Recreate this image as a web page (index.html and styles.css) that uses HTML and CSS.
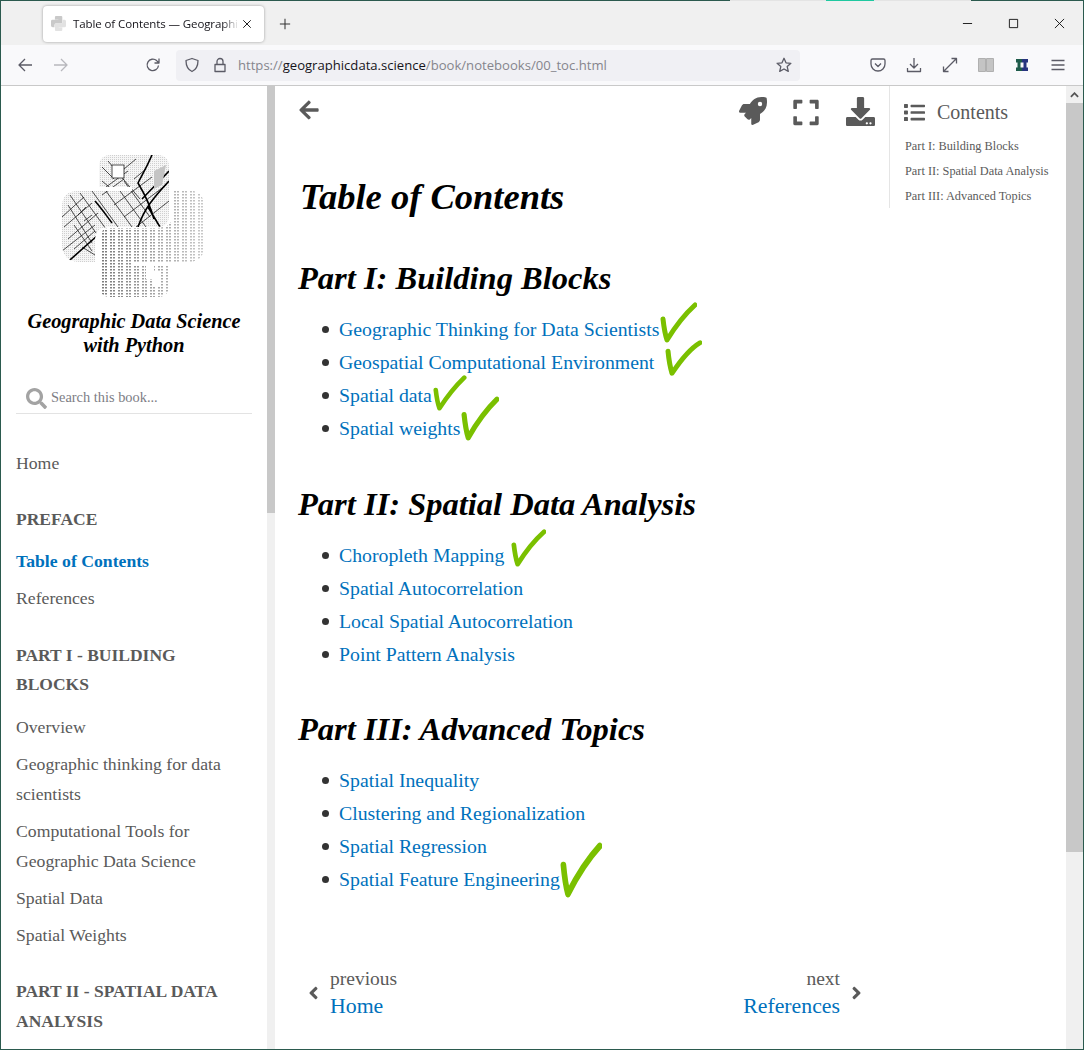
FILE: index.html
```html
<!DOCTYPE html>
<html>
<head>
    <title>Table of Contents — Geographic Data Science with Python</title>
    <link rel="stylesheet" href="styles.css">
</head>
<body>
<div class="window">
    <div class="stripe"><i class="s-a"></i><i class="s-b"></i><i class="s-c"></i><i class="s-b2"></i><i class="s-d"></i></div>

    <div class="tabbar">
        <div class="tab">
            <svg class="favicon" viewBox="0 0 142 142"><path fill="#c9c9c9" d="M47 0H97Q107 0 107 10V62Q107 72 97 72H47Q33 72 33 86V107H16Q0 107 0 90V50Q0 36 14 36H70V32H37V12Q37 0 47 0Z"/><path fill="#e2e2e2" d="M109 36H130Q142 36 142 52V92Q142 107 128 107H72V110H107V130Q107 142 97 142H47Q37 142 37 130V85Q37 72 47 72H95Q109 72 109 58Z"/></svg>
            <span class="tab-title">Table of Contents — Geographi</span>
            <svg class="tab-close" viewBox="0 0 12 12"><path d="M1.500 1.500l9 9M10.500 1.500l-9 9"/></svg>
        </div>
        <svg class="new-tab" viewBox="0 0 14 14"><path d="M7 1v12M1 7h12"/></svg>
        <div class="win-controls">
            <svg class="win-min" viewBox="0 0 12 12"><path d="M1 6h10"/></svg>
            <svg class="win-max" viewBox="0 0 12 12"><path d="M1.500 1.500h9v9h-9z"/></svg>
            <svg class="win-close" viewBox="0 0 12 12"><path d="M1 1l10 10M11 1L1 11"/></svg>
        </div>
    </div>

    <div class="navbar">
        <svg class="tool tool-back" viewBox="0 0 16 16"><path d="M15 8H2M8 2L2 8l6 6"/></svg>
        <svg class="tool tool-fwd" viewBox="0 0 16 16"><path d="M1 8h13M8 2l6 6-6 6"/></svg>
        <svg class="tool tool-reload" viewBox="0 0 16 16"><path d="M13.500 8.500A5.700 5.700 0 1 1 11.600 3.600L14 6M14 1.500V6H9.500"/></svg>
        <div class="urlbar">
            <svg class="tool" viewBox="0 0 16 16"><path d="M8 1.500l6 2c0 5.500-1.500 9-6 11-4.500-2-6-5.500-6-11z"/></svg>
            <svg class="tool tool-lock" viewBox="0 0 16 16"><path d="M3 7.500h10v7H3zM5 7.500V4.500a3 3 0 0 1 6 0v3"/></svg>
            <span class="url">https://<b>geographicdata.science</b>/book/notebooks/00_toc.html</span>
            <svg class="tool tool-star" viewBox="0 0 16 16"><path d="M8 1.300l2 4.500 4.900.5-3.700 3.300 1.100 4.800L8 12l-4.300 2.400 1.100-4.800L1.100 6.300 6 5.800z"/></svg>
        </div>
        <div class="nav-right">
            <svg class="tool" viewBox="0 0 16 16"><path d="M2.500 2h11a1.500 1.500 0 0 1 1.500 1.500V7A7 7 0 0 1 1 7V3.500A1.500 1.500 0 0 1 2.500 2zM5 6.500l3 3 3-3"/></svg>
            <svg class="tool" viewBox="0 0 16 16"><path d="M8 1v10M4 7l4 4 4-4M1.500 11v3.500h13V11"/></svg>
            <svg class="tool" viewBox="0 0 16 16"><path d="M1.500 14.500l13-13M9.500 1.500h5v5M1.500 9.500v5h5" /></svg>
            <svg class="tool tool-lib" viewBox="0 0 16 16"><path d="M.5 1.500h7v13h-7zM8.500 1.500h7v13h-7z"/></svg>
            <svg class="tool tool-ext" viewBox="0 0 16 16"><path fill="#1e5b4a" d="M2 2h6v3.500H6.500v5H8V14H2v-3.500h1.500v-5H2z"/><path fill="#27347f" d="M8 2h6v3.500h-1.500v5H14V14H8v-3.500h1.500v-5H8z"/></svg>
            <svg class="tool" viewBox="0 0 16 16"><path d="M1.500 3.500h13M1.500 8h13M1.500 12.500h13"/></svg>
        </div>
    </div>

    <div class="page">
        <nav class="sidebar">
            <svg class="logo" viewBox="0 0 142 142">
                <defs>
                    <clipPath id="topClip"><path d="M49 0H95Q107 0 107 12V60Q107 72 95 72H47Q33 72 33 86V107H18Q0 107 0 88V52Q0 36 16 36H70V32H37V12Q37 0 49 0Z"/></clipPath>
                    <clipPath id="botClip"><path d="M111 36H128Q142 36 142 52V90Q142 107 126 107H72V110H107V130Q107 142 95 142H49Q37 142 37 130V86Q37 73 49 73H95Q111 73 111 58Z"/></clipPath>
                    <pattern id="dither" width="2" height="2" patternUnits="userSpaceOnUse"><rect width="2" height="2" fill="#f6f6f6"/><rect width="1" height="1" fill="#cfcfcf"/></pattern>
                    <pattern id="digits" width="8" height="3" patternUnits="userSpaceOnUse"><rect width="5" height="1.500" fill="#7a7a7a"/><rect x="2" width="1" height="3" fill="#fff"/></pattern>
                    <linearGradient id="fadeOut"><stop offset="0" stop-color="#fff" stop-opacity="0"/><stop offset="1" stop-color="#fff" stop-opacity=".6"/></linearGradient>
                </defs>
                <g clip-path="url(#topClip)">
                    <rect width="142" height="142" fill="url(#dither)"/>
                    <path class="st-thin" d="M0 62L22 42M2 72L30 48M6 84L36 58M12 94L33 76M0 96L33 70M8 40L34 78M18 38L44 74M30 36L56 72M6 50L30 88M12 70L30 96M20 92L33 100M44 36L70 72M58 36L84 72M40 26L52 36M40 12L52 24M46 6L78 44M62 26L88 62M40 40L62 24M52 50L90 22M62 62L104 30M74 72L107 46M44 32L66 16M62 14L74 4M72 24L84 14M16 60L24 52M22 66L30 60"/>
                    <path class="st-thick" d="M76 72C82 54 92 42 107 26M90 0C84 14 80 20 76 28C82 38 88 50 92 64M0 112L36 80M33 46C40 54 44 60 50 68M98 72L86 52M80 44L107 16"/>
                    <rect x="50" y="10" width="12" height="13" fill="#fff" stroke="#222" stroke-width=".8"/>
                    <path fill="#c4c4c4" d="M92 16L104 10 100 30 92 34z"/>
                </g>
                <g clip-path="url(#botClip)">
                    <rect width="142" height="142" fill="#fff"/>
                    <rect x="37" y="36" width="105" height="106" fill="url(#digits)"/>
                    <rect x="37" y="36" width="105" height="106" fill="url(#fadeOut)"/>
                    <path fill="#fff" d="M84 108h8v8h6v16h-8v-8h-6z"/>
                </g>
            </svg>
            <div class="book-title">Geographic Data Science<br>with Python</div>
            <div class="search">
                <svg class="search-icon" viewBox="0 0 512 512"><path d="M505 442.700L405.300 343c-4.500-4.500-10.600-7-17-7H372c27.600-35.300 44-79.700 44-128C416 93.100 322.900 0 208 0S0 93.100 0 208s93.100 208 208 208c48.300 0 92.700-16.400 128-44v16.300c0 6.400 2.500 12.500 7 17l99.700 99.700c9.400 9.400 24.600 9.400 33.900 0l28.300-28.300c9.400-9.400 9.400-24.600.1-34zM208 336c-70.700 0-128-57.200-128-128 0-70.700 57.200-128 128-128 70.700 0 128 57.200 128 128 0 70.700-57.200 128-128 128z"/></svg>
                <span>Search this book...</span>
            </div>
            <a class="side-link side-home">Home</a>
            <div class="side-head side-first">PREFACE</div>
            <a class="side-link active">Table of Contents</a>
            <a class="side-link">References</a>
            <div class="side-head">PART I - BUILDING BLOCKS</div>
            <a class="side-link">Overview</a>
            <a class="side-link">Geographic thinking for data scientists</a>
            <a class="side-link">Computational Tools for Geographic Data Science</a>
            <a class="side-link">Spatial Data</a>
            <a class="side-link">Spatial Weights</a>
            <div class="side-head">PART II - SPATIAL DATA ANALYSIS</div>
        </nav>
        <div class="side-scroll"><div class="side-thumb"></div></div>

        <main class="content">
            <div class="top-icons">
                <svg class="icon-back" viewBox="0 0 448 512"><path d="M257.500 445.100l-22.200 22.200c-9.400 9.400-24.600 9.400-33.900 0L7 273c-9.400-9.400-9.400-24.600 0-33.900L201.400 44.700c9.400-9.400 24.600-9.400 33.900 0l22.200 22.200c9.500 9.500 9.300 25-.4 34.300L136.600 216H424c13.300 0 24 10.700 24 24v32c0 13.300-10.700 24-24 24H136.600l120.500 114.800c9.800 9.300 10 24.800.4 34.300z"/></svg>
                <svg class="icon-rocket" viewBox="0 0 512 512"><path d="M505.100 19.100c-1.200-5.500-6.700-11-12.200-12.200C460.700 0 435.500 0 410.400 0 307.200 0 245.300 55.200 199.100 128H94.800c-16.300 0-35.600 11.900-42.900 26.500L2.500 253.300A28.400 28.400 0 0 0 0 264a24 24 0 0 0 24 24h103.800l-22.500 22.500c-11.400 11.400-13 32.300 0 45.200l50.900 50.900c11.200 11.200 32.200 13.200 45.300 0l22.500-22.500V488a24 24 0 0 0 24 24 28.600 28.600 0 0 0 10.700-2.500l98.700-49.400c14.600-7.300 26.500-26.500 26.500-42.900V312.800c72.600-46.300 128-108.400 128-211.100.1-25.200.1-50.400-6.900-82.600zM384 168a40 40 0 1 1 40-40 40 40 0 0 1-40 40z"/></svg>
                <svg class="icon-expand" viewBox="0 0 448 512"><path d="M0 180V56c0-13.300 10.700-24 24-24h124c6.600 0 12 5.400 12 12v40c0 6.600-5.400 12-12 12H64v84c0 6.600-5.400 12-12 12H12c-6.600 0-12-5.400-12-12zM288 44v40c0 6.600 5.400 12 12 12h84v84c0 6.600 5.400 12 12 12h40c6.600 0 12-5.400 12-12V56c0-13.300-10.700-24-24-24H300c-6.600 0-12 5.400-12 12zm148 276h-40c-6.600 0-12 5.400-12 12v84h-84c-6.600 0-12 5.400-12 12v40c0 6.600 5.400 12 12 12h124c13.300 0 24-10.700 24-24V332c0-6.600-5.400-12-12-12zM160 468v-40c0-6.600-5.400-12-12-12H64v-84c0-6.600-5.400-12-12-12H12c-6.600 0-12 5.400-12 12v124c0 13.300 10.700 24 24 24h124c6.600 0 12-5.400 12-12z"/></svg>
                <svg class="icon-download" viewBox="0 0 512 512"><path d="M216 0h80c13.300 0 24 10.700 24 24v168h87.700c17.800 0 26.700 21.500 14.100 34.100L269.700 378.300c-7.500 7.500-19.800 7.500-27.300 0L90.100 226.100c-12.600-12.600-3.700-34.100 14.100-34.100H192V24c0-13.300 10.700-24 24-24zm296 376v112c0 13.300-10.700 24-24 24H24c-13.300 0-24-10.700-24-24V376c0-13.300 10.700-24 24-24h146.700l49 49c20.100 20.100 52.500 20.100 72.600 0l49-49H488c13.300 0 24 10.700 24 24zm-124 88c0-11-9-20-20-20s-20 9-20 20 9 20 20 20 20-9 20-20zm64 0c0-11-9-20-20-20s-20 9-20 20 9 20 20 20 20-9 20-20z"/></svg>
            </div>

            <h1>Table of Contents</h1>

            <h2>Part I: Building Blocks</h2>
            <ul>
                <li><a>Geographic Thinking for Data Scientists</a><svg class="check check-1" viewBox="0 0 37 41" preserveAspectRatio="none"><path d="M3 17C4 26 5 32 7 38 15 25 24 13 35 3"/></svg></li>
                <li><a>Geospatial Computational Environment</a><svg class="check check-2" viewBox="0 0 37 41" preserveAspectRatio="none"><path d="M3 13C4 24 5 30 7 37 15 24 24 11 35 4"/></svg></li>
                <li><a>Spatial data</a><svg class="check check-3" viewBox="0 0 37 41" preserveAspectRatio="none"><path d="M3 17C4 26 5 32 7 38 15 25 24 13 34 3"/></svg></li>
                <li><a>Spatial weights</a><svg class="check check-4" viewBox="0 0 37 41" preserveAspectRatio="none"><path d="M3 17C4 26 5 32 7 38 15 25 24 13 35 3"/></svg></li>
            </ul>

            <h2>Part II: Spatial Data Analysis</h2>
            <ul>
                <li><a>Choropleth Mapping</a><svg class="check check-5" viewBox="0 0 37 41" preserveAspectRatio="none"><path d="M3 17C4 26 5 32 7 38 15 25 24 13 35 3"/></svg></li>
                <li><a>Spatial Autocorrelation</a></li>
                <li><a>Local Spatial Autocorrelation</a></li>
                <li><a>Point Pattern Analysis</a></li>
            </ul>

            <h2>Part III: Advanced Topics</h2>
            <ul>
                <li><a>Spatial Inequality</a></li>
                <li><a>Clustering and Regionalization</a></li>
                <li><a>Spatial Regression</a></li>
                <li><a>Spatial Feature Engineering</a><svg class="check check-6" viewBox="0 0 37 41" preserveAspectRatio="none"><path d="M3 17C4 26 5 32 7 38 15 25 24 13 35 3"/></svg></li>
            </ul>

            <div class="prev-next">
                <div class="pn">
                    <svg class="chev" viewBox="0 0 256 512"><path d="M31.700 239l136-136c9.400-9.400 24.600-9.400 33.900 0l22.600 22.600c9.400 9.400 9.400 24.600 0 33.900L127.900 256l96.400 96.400c9.400 9.400 9.400 24.600 0 33.900L201.700 409c-9.400 9.400-24.600 9.400-33.900 0l-136-136c-9.500-9.400-9.500-24.600-.1-34z"/></svg>
                    <div><div class="pn-label">previous</div><a class="pn-link">Home</a></div>
                </div>
                <div class="pn pn-right">
                    <div><div class="pn-label">next</div><a class="pn-link">References</a></div>
                    <svg class="chev" viewBox="0 0 256 512"><path d="M224.300 273l-136 136c-9.400 9.400-24.600 9.400-33.900 0l-22.600-22.600c-9.400-9.400-9.400-24.600 0-33.900l96.400-96.400-96.400-96.400c-9.400-9.400-9.400-24.600 0-33.900L54.300 103c9.400-9.400 24.600-9.400 33.900 0l136 136c9.500 9.400 9.500 24.600.1 34z"/></svg>
                </div>
            </div>
        </main>

        <aside class="toc">
            <div class="toc-head">
                <svg class="toc-icon" viewBox="0 0 512 512"><path d="M80 368H16a16 16 0 0 0-16 16v64a16 16 0 0 0 16 16h64a16 16 0 0 0 16-16v-64a16 16 0 0 0-16-16zm0-320H16A16 16 0 0 0 0 64v64a16 16 0 0 0 16 16h64a16 16 0 0 0 16-16V64a16 16 0 0 0-16-16zm0 160H16a16 16 0 0 0-16 16v64a16 16 0 0 0 16 16h64a16 16 0 0 0 16-16v-64a16 16 0 0 0-16-16zm416 176H176a16 16 0 0 0-16 16v32a16 16 0 0 0 16 16h320a16 16 0 0 0 16-16v-32a16 16 0 0 0-16-16zm0-320H176a16 16 0 0 0-16 16v32a16 16 0 0 0 16 16h320a16 16 0 0 0 16-16V80a16 16 0 0 0-16-16zm0 160H176a16 16 0 0 0-16 16v32a16 16 0 0 0 16 16h320a16 16 0 0 0 16-16v-32a16 16 0 0 0-16-16z"/></svg>
                <span>Contents</span>
            </div>
            <a class="toc-item">Part I: Building Blocks</a>
            <a class="toc-item">Part II: Spatial Data Analysis</a>
            <a class="toc-item">Part III: Advanced Topics</a>
        </aside>

        <div class="page-scroll">
            <div class="scroll-up"><svg viewBox="0 0 10 6"><path d="M1 5l4-4 4 4"/></svg></div>
            <div class="page-thumb"></div>
        </div>
    </div>
</div>
</body>
</html>
```

FILE: styles.css
```css
* {
  box-sizing: border-box;
}
html, body {
  margin: 0;
  height: 100%;
  overflow: hidden;
}
body {
  font-family: "Liberation Serif", serif;
  background: #fff;
}
a {
  color: #0071bc;
}
.window {
  width: 1084px;
  height: 1050px;
  display: flex;
  flex-direction: column;
  border: 1px solid #2b5a4e;
  border-top: none;
  overflow: hidden;
}

/* browser chrome */
.stripe {
  display: flex;
  height: 1px;
  flex: none;
}
.stripe i {
  display: block;
  height: 1px;
}
.s-a { width: 729px; background: #2b5a4e; }
.s-b { width: 96px; background: #e4e4e4; }
.s-c { width: 48px; background: #1fc8a0; }
.s-b2 { width: 97px; background: #e4e4e4; }
.s-d { flex: 1; background: #2b5a4e; }

.tabbar {
  height: 44px;
  flex: none;
  background: #f0f0f0;
  display: flex;
  align-items: center;
  padding-left: 42px;
  padding-top: 1px;
}
.tab {
  width: 221px;
  height: 36px;
  background: #fff;
  border-radius: 4px;
  box-shadow: 0 0 3px rgba(0, 0, 0, .35);
  display: flex;
  align-items: center;
  padding-left: 8px;
  font-family: "Open Sans", sans-serif;
  font-size: 11.500px;
  letter-spacing: -.1px;
  color: #15141a;
}
.favicon {
  width: 15px;
  height: 15px;
  flex: none;
}
.tab-title {
  width: 166px;
  margin-left: 7px;
  white-space: nowrap;
  -webkit-mask-image: linear-gradient(to right, #000 90%, transparent);
  mask-image: linear-gradient(to right, #000 90%, transparent);
}
.tab-close {
  width: 10px;
  height: 10px;
  margin-left: 3px;
  fill: none;
  stroke: #222;
  stroke-width: 1.200;
}
.new-tab {
  width: 12px;
  height: 12px;
  margin-left: 15px;
  fill: none;
  stroke: #333;
  stroke-width: 1.200;
}
.win-controls {
  margin-left: auto;
  display: flex;
  align-items: center;
  padding-right: 18px;
}
.win-controls svg {
  width: 11px;
  height: 11px;
  fill: none;
  stroke: #111;
  stroke-width: 1;
}
.win-max {
  margin-left: 35px;
}
.win-close {
  margin-left: 35px;
}

.navbar {
  height: 41px;
  flex: none;
  background: #f9f9fb;
  border-bottom: 1px solid #c9c9c9;
  display: flex;
  align-items: center;
  padding-left: 16px;
}
.tool {
  width: 16px;
  height: 16px;
  flex: none;
  fill: none;
  stroke: #5b5b66;
  stroke-width: 1.300;
  stroke-linejoin: round;
}
.tool-fwd {
  margin-left: 20px;
  stroke: #b8b8bd;
}
.tool-reload {
  margin-left: 76px;
}
.urlbar {
  width: 624px;
  height: 31px;
  margin-left: 15px;
  background: #f0f0f4;
  border-radius: 4px;
  display: flex;
  align-items: center;
  padding-left: 8px;
}
.tool-lock {
  margin-left: 12px;
}
.url {
  margin-left: 10px;
  font-family: "Open Sans", sans-serif;
  font-size: 13.100px;
  color: #85858c;
  white-space: nowrap;
}
.url b {
  font-weight: normal;
  color: #15141a;
}
.tool-star {
  margin-left: auto;
  margin-right: 8px;
}
.nav-right {
  display: flex;
  gap: 20px;
  margin-left: 70px;
}
.tool-lib {
  fill: #c4c4c4;
  stroke: #b0b0b0;
  stroke-width: 1;
}
.tool-ext {
  stroke: none;
}

/* page */
.page {
  flex: 1;
  display: flex;
  min-height: 0;
  color: #5a5a5a;
}
.sidebar {
  width: 266px;
  flex: none;
  overflow: hidden;
  padding: 69px 15px 0;
}
.logo {
  display: block;
  width: 142px;
  height: 142px;
  margin-left: 46px;
}
.st-thin {
  fill: none;
  stroke: #222;
  stroke-width: .8;
}
.st-thick {
  fill: none;
  stroke: #000;
  stroke-width: 1.600;
}
.book-title {
  margin-top: 12px;
  text-align: center;
  font-size: 20.300px;
  line-height: 24px;
  font-style: italic;
  font-weight: bold;
  color: #000;
  white-space: nowrap;
}
.search {
  width: 236px;
  margin-top: 24px;
  height: 33px;
  border-bottom: 1px solid #e3e3e3;
  display: flex;
  align-items: center;
  padding-left: 10px;
  font-size: 14.400px;
  color: #7d7d85;
}
.search-icon {
  width: 21px;
  height: 21px;
  margin-right: 4px;
  margin-top: 3px;
  fill: #a3a3a3;
}
.side-link {
  display: block;
  color: #5a5a5a;
  font-size: 17.700px;
  line-height: 30px;
  margin-bottom: 7px;
}
.side-home {
  margin-top: 34px;
}
.side-link.active {
  color: #0071bc;
  font-weight: bold;
}
.side-head {
  font-size: 17.500px;
  font-weight: bold;
  line-height: 29.500px;
  color: #5a5a5a;
  margin: 27.500px 0 12px;
}
.side-first {
  margin-top: 26.500px;
}
.side-scroll {
  width: 8px;
  flex: none;
  background: #f0f0f0;
}
.side-thumb {
  height: 427px;
  background: #c8c8c8;
}

.content {
  width: 614px;
  flex: none;
  padding: 0 23px;
  overflow: hidden;
}
.top-icons {
  height: 52px;
  display: flex;
  align-items: center;
  fill: #5a5a5a;
}
.top-icons svg {
  flex: none;
}
.icon-back {
  width: 22px;
  height: 22px;
  margin-top: -4px;
}
.icon-rocket {
  width: 28px;
  height: 28px;
  margin-left: auto;
  margin-top: -3px;
}
.icon-expand {
  width: 26px;
  height: 29px;
  margin-left: 26px;
}
.icon-download {
  width: 29px;
  height: 29px;
  margin-left: 27px;
  margin-right: -9px;
  margin-top: -2px;
}
h1 {
  margin: 33px 0 0 2px;
  font-size: 36.500px;
  line-height: 52px;
  font-style: italic;
  font-weight: bold;
  color: #000;
}
h2 {
  margin: 0 0 13px;
  font-size: 32.500px;
  line-height: 44px;
  font-style: italic;
  font-weight: bold;
  color: #000;
}
h1 + h2 {
  margin-top: 33px;
}
ul {
  margin: 0 0 36.600px;
  padding-left: 41px;
  list-style: none;
}
li {
  height: 33px;
  font-size: 19.800px;
  line-height: 33px;
  position: relative;
  white-space: nowrap;
}
li::before {
  content: "";
  position: absolute;
  left: -17.500px;
  top: 13px;
  width: 7px;
  height: 7px;
  border-radius: 50%;
  background: #333;
}
.check {
  position: absolute;
  fill: none;
  stroke: #7ac000;
  stroke-width: 5;
  stroke-linecap: round;
  stroke-linejoin: round;
}
.check-1 { left: 321px; top: -11px; width: 37px; height: 41px; }
.check-2 { left: 326px; top: -7px; width: 37px; height: 38px; }
.check-3 { left: 94px; top: -4px; width: 34px; height: 36px; }
.check-4 { left: 122px; top: -16px; width: 38px; height: 45px; }
.check-5 { left: 172px; top: -10px; width: 35px; height: 38px; }
.check-6 { left: 221px; top: -21px; width: 42px; height: 56px; }

.prev-next {
  display: flex;
  justify-content: space-between;
  margin-top: 71px;
  padding: 0 0 0 10px;
  width: 564px;
}
.pn {
  display: flex;
  align-items: center;
  gap: 11px;
}
.pn-right {
  text-align: right;
}
.pn-label {
  font-size: 19.500px;
  line-height: 24px;
}
.pn-link {
  display: block;
  font-size: 21.800px;
  line-height: 30px;
}
.chev {
  width: 11px;
  height: 20px;
  margin-top: -2px;
  fill: #5a5a5a;
}

.toc {
  width: 177px;
  height: 122px;
  flex: none;
  border-left: 1px solid #e5e5e5;
  padding-left: 15px;
}
.toc-head {
  display: flex;
  align-items: center;
  height: 52px;
  margin-bottom: -4px;
  font-size: 20px;
}
.toc-icon {
  width: 21px;
  height: 21px;
  margin-left: -1px;
  margin-right: 12px;
  fill: #5a5a5a;
}
.toc-item {
  display: block;
  font-size: 12.300px;
  line-height: 25px;
  color: #5a5a5a;
  white-space: nowrap;
}
.page-scroll {
  width: 17px;
  flex: none;
  background: #f0f0f0;
}
.scroll-up {
  height: 17px;
  display: flex;
  align-items: center;
  justify-content: center;
}
.scroll-up svg {
  width: 9px;
  height: 6px;
  fill: none;
  stroke: #555;
  stroke-width: 2;
}
.page-thumb {
  height: 749px;
  background: #c8c8c8;
}
```
